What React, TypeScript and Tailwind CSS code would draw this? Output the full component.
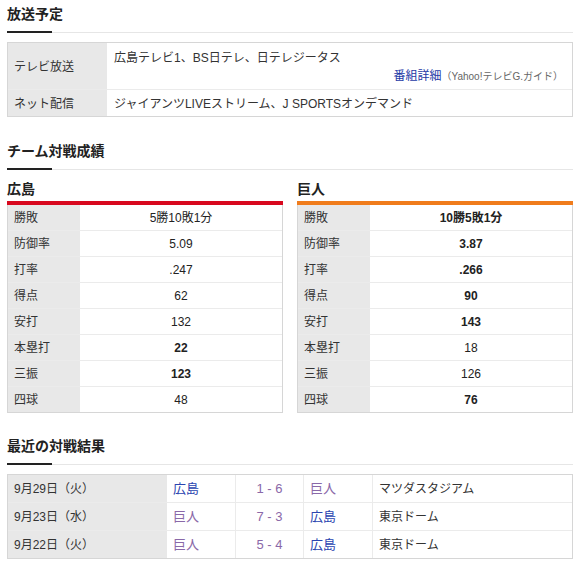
const font = { fontFamily: '"Liberation Sans", "Noto Sans CJK JP", sans-serif' };

const SectionTitle = ({ title }: { title: string }) => (
  <div>
    <h2 className="text-[14px] leading-[20px] font-bold text-[#222]">{title}</h2>
    <div className="mt-[7px] flex items-end">
      <div className="w-[45px] h-[2px] bg-[#222]" />
      <div className="flex-1 h-px bg-[#e6e6e6]" />
    </div>
  </div>
);

const statLabels = ['勝敗', '防御率', '打率', '得点', '安打', '本塁打', '三振', '四球'];

interface StatValue {
  v: string;
  bold?: boolean;
}

const carp: StatValue[] = [
  { v: '5勝10敗1分' },
  { v: '5.09' },
  { v: '.247' },
  { v: '62' },
  { v: '132' },
  { v: '22', bold: true },
  { v: '123', bold: true },
  { v: '48' },
];

const giants: StatValue[] = [
  { v: '10勝5敗1分', bold: true },
  { v: '3.87', bold: true },
  { v: '.266', bold: true },
  { v: '90', bold: true },
  { v: '143', bold: true },
  { v: '18' },
  { v: '126' },
  { v: '76', bold: true },
];

const TeamStats = ({ name, bar, values }: { name: string; bar: string; values: StatValue[] }) => (
  <div className="flex-1">
    <h3 className="mt-[9px] text-[14px] leading-[20px] font-bold text-[#222]">{name}</h3>
    <div className={`mt-[2px] h-[4px] ${bar}`} />
    <div className="border-x border-b border-[#d6d6d6]">
      {statLabels.map((label, i) => {
        const last = i === statLabels.length - 1;
        return (
          <div key={label} className={`flex ${last ? 'h-[25px]' : 'h-[26px] border-b border-[#ebebeb]'}`}>
            <div className="w-[72px] bg-[#e8e8e8] pl-[6px] pt-[1px] flex items-center text-[12px] text-[#333]">{label}</div>
            <div className={`flex-1 pt-[1px] flex items-center justify-center text-[12px] text-[#222] ${values[i].bold ? 'font-bold' : ''}`}>
              {values[i].v}
            </div>
          </div>
        );
      })}
    </div>
  </div>
);

const blue = 'text-[#2a44b0]';
const purple = 'text-[#8a68a8]';

const results = [
  { date: '9月29日（火）', home: '広島', homeColor: blue, score: '1 - 6', away: '巨人', awayColor: purple, venue: 'マツダスタジアム' },
  { date: '9月23日（水）', home: '巨人', homeColor: purple, score: '7 - 3', away: '広島', awayColor: blue, venue: '東京ドーム' },
  { date: '9月22日（火）', home: '巨人', homeColor: purple, score: '5 - 4', away: '広島', awayColor: blue, venue: '東京ドーム' },
];

export default function App() {
  return (
    <div className="w-[580px] h-[561px] bg-white px-[7px] pt-[4px] text-[#333]" style={font}>
      <SectionTitle title="放送予定" />
      <div className="mt-[9px] border border-[#d6d6d6] text-[12px]">
        <div className="flex border-b border-[#ebebeb]">
          <div className="w-[99px] bg-[#e8e8e8] pl-[6px] pt-[1px] flex items-center">テレビ放送</div>
          <div className="flex-1 pl-[7px] pr-[9px] pt-[6px] pb-[3px] leading-[18px]">
            <div>広島テレビ1、BS日テレ、日テレジータス</div>
            <div className="text-right">
              <span className="text-[#1d3aa6]">番組詳細</span>
              <span className="text-[10px] text-[#666]">（Yahoo!テレビG.ガイド）</span>
            </div>
          </div>
        </div>
        <div className="flex h-[26px]">
          <div className="w-[99px] bg-[#e8e8e8] pl-[6px] pt-[1px] flex items-center">ネット配信</div>
          <div className="flex-1 pl-[7px] pt-[1px] flex items-center">ジャイアンツLIVEストリーム、J SPORTSオンデマンド</div>
        </div>
      </div>

      <div className="mt-[24px]">
        <SectionTitle title="チーム対戦成績" />
      </div>
      <div className="flex gap-[14px]">
        <TeamStats name="広島" bar="bg-[#d8081e]" values={carp} />
        <TeamStats name="巨人" bar="bg-[#f07c1c]" values={giants} />
      </div>

      <div className="mt-[23px]">
        <SectionTitle title="最近の対戦結果" />
      </div>
      <div className="mt-[9px] border border-[#d6d6d6] text-[12px]">
        {results.map((r, i) => {
          const last = i === results.length - 1;
          return (
            <div key={r.date} className={`flex ${last ? 'h-[27px]' : 'h-[28px] border-b border-[#ebebeb]'}`}>
              <div className="w-[159px] bg-[#e8e8e8] pl-[6px] pt-[1px] flex items-center">{r.date}</div>
              <div className={`w-[68px] pl-[6px] pt-[1px] flex items-center text-[13px] ${r.homeColor}`}>{r.home}</div>
              <div className={`w-[68px] border-l border-[#ebebeb] pt-[1px] flex items-center justify-center text-[13px] ${purple}`}>{r.score}</div>
              <div className={`w-[69px] border-l border-[#ebebeb] pl-[6px] pt-[1px] flex items-center text-[13px] ${r.awayColor}`}>{r.away}</div>
              <div className="flex-1 border-l border-[#ebebeb] pl-[6px] pt-[1px] flex items-center">{r.venue}</div>
            </div>
          );
        })}
      </div>
    </div>
  );
}
